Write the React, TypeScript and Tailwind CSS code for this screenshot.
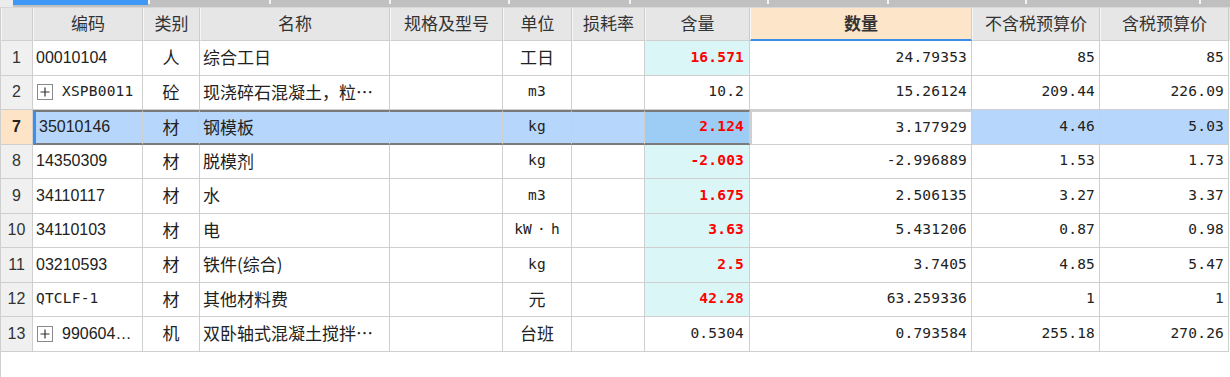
import React from "react";

type Row = {
  n: string;
  code: string;
  codeMono?: boolean;
  plus?: boolean;
  type: string;
  name: string;
  unit: string;
  unitCjk?: boolean;
  qty: string;
  red: boolean;
  amt: string;
  p1: string;
  p2: string;
  sel?: boolean;
};

const rows: Row[] = [
  { n: "1", code: "00010104", type: "人", name: "综合工日", unit: "工日", unitCjk: true, qty: "16.571", red: true, amt: "24.79353", p1: "85", p2: "85" },
  { n: "2", code: "XSPB0011", codeMono: true, plus: true, type: "砼", name: "现浇碎石混凝土，粒…", unit: "m3", qty: "10.2", red: false, amt: "15.26124", p1: "209.44", p2: "226.09" },
  { n: "7", code: "35010146", type: "材", name: "钢模板", unit: "kg", qty: "2.124", red: true, amt: "3.177929", p1: "4.46", p2: "5.03", sel: true },
  { n: "8", code: "14350309", type: "材", name: "脱模剂", unit: "kg", qty: "-2.003", red: true, amt: "-2.996889", p1: "1.53", p2: "1.73" },
  { n: "9", code: "34110117", type: "材", name: "水", unit: "m3", qty: "1.675", red: true, amt: "2.506135", p1: "3.27", p2: "3.37" },
  { n: "10", code: "34110103", type: "材", name: "电", unit: "kW·h", qty: "3.63", red: true, amt: "5.431206", p1: "0.87", p2: "0.98" },
  { n: "11", code: "03210593", type: "材", name: "铁件(综合)", unit: "kg", qty: "2.5", red: true, amt: "3.7405", p1: "4.85", p2: "5.47" },
  { n: "12", code: "QTCLF-1", codeMono: true, type: "材", name: "其他材料费", unit: "元", unitCjk: true, qty: "42.28", red: true, amt: "63.259336", p1: "1", p2: "1" },
  { n: "13", code: "990604…", plus: true, type: "机", name: "双卧轴式混凝土搅拌…", unit: "台班", unitCjk: true, qty: "0.5304", red: false, amt: "0.793584", p1: "255.18", p2: "270.26" },
];

const CJK = "font-['Noto_Sans_CJK_SC',sans-serif] text-[17px] pb-[2px]";
const MONO = "font-['DejaVu_Sans_Mono','Noto_Sans_CJK_SC',monospace] text-[14.5px] tracking-[0.2px]";
const SANS = "font-['Liberation_Sans',sans-serif] text-[16px]";

const headers: { label: string; w: string; hl?: boolean }[] = [
  { label: "", w: "w-[32px]" },
  { label: "编码", w: "w-[110px]" },
  { label: "类别", w: "w-[57px]" },
  { label: "名称", w: "w-[190px]" },
  { label: "规格及型号", w: "w-[113px]" },
  { label: "单位", w: "w-[69px]" },
  { label: "损耗率", w: "w-[73px]" },
  { label: "含量", w: "w-[105px]" },
  { label: "数量", w: "w-[222px]", hl: true },
  { label: "不含税预算价", w: "w-[128px]" },
  { label: "含税预算价", w: "w-[129px]" },
];

function PlusBox() {
  return (
    <span className="inline-flex items-center justify-center w-[16px] h-[16px] border border-[#8a8a8a] bg-white ml-[1px] mr-[9px] shrink-0">
      <svg width="12" height="12" viewBox="0 0 12 12">
        <path d="M6 1.5v9M1.5 6h9" stroke="#333" strokeWidth="1.2" />
      </svg>
    </span>
  );
}

function Unit({ u, cjk }: { u: string; cjk?: boolean }) {
  if (cjk) return <span className={`${CJK} text-[#222]`}>{u}</span>;
  if (u === "kW·h")
    return (
      <span className={`${MONO} text-[#222]`}>
        kW<span className="mx-[5px]">·</span>h
      </span>
    );
  return <span className={`${MONO} text-[#222]`}>{u}</span>;
}

function DataRow({ r }: { r: Row }) {
  const cellB = "border-r border-b border-[#cfcfcf] h-full flex items-center shrink-0";
  const sel = r.sel;
  const rowBg = sel ? "bg-[#b6d7fb]" : "bg-white";
  const selTB = sel ? "border-t-2 border-t-[#7a7a7a] border-b-2 border-b-[#7a7a7a]" : "";
  return (
    <div className="flex h-[34.5px]">
      <div
        className={`w-[32px] ${cellB} justify-center ${
          sel ? "bg-[#fde4c6] font-bold text-[#222]" : "bg-[#f0f0f0] text-[#333]"
        } font-['Liberation_Sans',sans-serif] text-[16px]`}
      >
        {r.n}
      </div>
      <div
        className={`w-[110px] ${cellB} ${rowBg} ${selTB} pl-[3px] ${
          sel ? "border-l-[3px] border-l-[#3d8fe9] pl-[1px]" : ""
        } text-[#222] whitespace-nowrap overflow-hidden`}
      >
        {r.plus && <PlusBox />}
        <span className={r.codeMono ? MONO : SANS}>{r.code}</span>
      </div>
      <div className={`w-[57px] ${cellB} ${rowBg} ${selTB} justify-center ${CJK} text-[#222]`}>{r.type}</div>
      <div className={`w-[190px] ${cellB} ${rowBg} ${selTB} pl-[3px] ${CJK} text-[#222] whitespace-nowrap overflow-hidden`}>
        {r.name}
      </div>
      <div className={`w-[113px] ${cellB} ${rowBg} ${selTB}`}></div>
      <div className={`w-[69px] ${cellB} ${rowBg} ${selTB} justify-center`}>
        <Unit u={r.unit} cjk={r.unitCjk} />
      </div>
      <div className={`w-[73px] ${cellB} ${rowBg} ${selTB}`}></div>
      <div
        className={`w-[105px] ${cellB} ${selTB} justify-end pr-[5px] ${
          sel ? "bg-[#9dcdf4]" : r.red ? "bg-[#dbf6f6]" : "bg-white"
        } ${MONO} ${r.red ? "text-[#ff0000] font-bold" : "text-[#222]"}`}
      >
        {r.qty}
      </div>
      <div
        className={`w-[222px] ${cellB} justify-end pr-[4px] bg-white ${MONO} text-[#222] ${
          sel ? "border-2 border-[#6f6f6f]" : ""
        }`}
      >
        {r.amt}
      </div>
      <div className={`w-[128px] ${cellB} ${rowBg} justify-end pr-[4px] ${MONO} text-[#222]`}>{r.p1}</div>
      <div className={`w-[129px] ${cellB} ${rowBg} justify-end pr-[4px] ${MONO} text-[#222]`}>{r.p2}</div>
    </div>
  );
}

export default function App() {
  const ticks = ["left-[148px]", "left-[269px]", "left-[389px]", "left-[508px]", "left-[629px]", "left-[767px]", "left-[887px]", "left-[1025px]", "left-[1199px]"];
  return (
    <div className="w-[1230px] h-[377px] bg-white overflow-hidden flex flex-col">
      <div className="relative h-[7px] bg-[#c0c0c0] flex shrink-0">
        <div className="w-[13px] h-full bg-[#ececec]"></div>
        <div className="w-[135px] h-[5px] bg-[#3f97f6]"></div>
        {ticks.map((t) => (
          <div key={t} className={`absolute top-0 ${t} w-[2px] h-[4px] bg-[#f4f4f4]`}></div>
        ))}
      </div>
      <div className="flex-1 border-l border-[#cfcfcf] flex flex-col">
        <div className="flex h-[34px] border-t border-[#d8d8d8] bg-[#e6e6e6] shrink-0">
          {headers.map((h, i) => (
            <div
              key={i}
              className={`${h.w} shrink-0 h-full flex items-center justify-center pb-[2px] border-r border-[#cdcdcd] border-l border-l-[#f6f6f6] ${
                h.hl
                  ? "bg-[#fde5c9] border-b-2 border-b-[#3a8ee8] font-bold text-[#333]"
                  : "border-b border-b-[#cfcfcf] text-[#333]"
              } font-['Noto_Sans_CJK_SC',sans-serif] text-[17px]`}
            >
              {h.label}
            </div>
          ))}
        </div>
        {rows.map((r) => (
          <DataRow key={r.n} r={r} />
        ))}
      </div>
    </div>
  );
}
